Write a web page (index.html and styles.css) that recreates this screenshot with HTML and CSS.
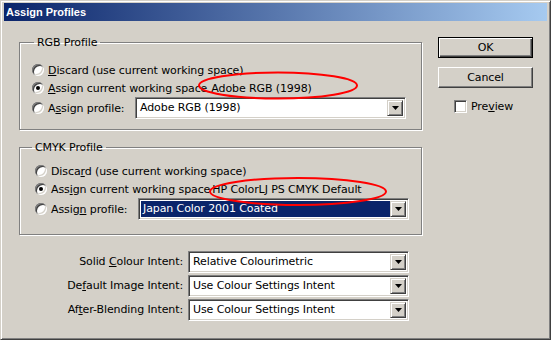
FILE: index.html
```html
<!DOCTYPE html>
<html lang="en">
<head>
    <meta charset="UTF-8">
    <title>Assign Profiles</title>
    <link rel="stylesheet" href="styles.css">
</head>
<body>
    <div class="dialog">
        <div class="titlebar">Assign Profiles</div>
        <div class="content">
            <div class="main">
                <fieldset class="group rgb">
                    <legend>RGB Profile</legend>
                    <div class="rows">
                        <div class="opt"><span class="radio"></span><span><u>D</u>iscard (use current working space)</span></div>
                        <div class="opt"><span class="radio on"></span><span><u>A</u>ssign current working space</span><span class="cur">Adobe RGB (1998)</span></div>
                        <div class="opt pick"><span class="radio"></span><span class="pick-label">A<u>s</u>sign profile:</span>
                            <div class="combo"><span class="combo-text">Adobe RGB (1998)</span><span class="combo-btn"><svg width="7" height="4"><polygon points="0,0 7,0 3.5,4" fill="#000"/></svg></span></div>
                        </div>
                    </div>
                </fieldset>
                <fieldset class="group cmyk">
                    <legend>CMYK Profile</legend>
                    <div class="rows">
                        <div class="opt"><span class="radio"></span><span>Disca<u>r</u>d (use current working space)</span></div>
                        <div class="opt"><span class="radio on"></span><span>Ass<u>i</u>gn current working space</span><span class="cur">HP ColorLJ PS CMYK Default</span></div>
                        <div class="opt pick"><span class="radio"></span><span class="pick-label">Assig<u>n</u> profile:</span>
                            <div class="combo selected"><span class="combo-text">Japan Color 2001 Coated</span><span class="combo-btn"><svg width="7" height="4"><polygon points="0,0 7,0 3.5,4" fill="#000"/></svg></span></div>
                        </div>
                    </div>
                </fieldset>
                <div class="intents">
                    <span class="intent-label">Solid <u>C</u>olour Intent:</span>
                    <div class="combo"><span class="combo-text">Relative Colourimetric</span><span class="combo-btn"><svg width="7" height="4"><polygon points="0,0 7,0 3.5,4" fill="#000"/></svg></span></div>
                    <span class="intent-label">De<u>f</u>ault Image Intent:</span>
                    <div class="combo"><span class="combo-text">Use Colour Settings Intent</span><span class="combo-btn"><svg width="7" height="4"><polygon points="0,0 7,0 3.5,4" fill="#000"/></svg></span></div>
                    <span class="intent-label">Af<u>t</u>er-Blending Intent:</span>
                    <div class="combo"><span class="combo-text">Use Colour Settings Intent</span><span class="combo-btn"><svg width="7" height="4"><polygon points="0,0 7,0 3.5,4" fill="#000"/></svg></span></div>
                </div>
            </div>
            <div class="side">
                <div class="btn default">OK</div>
                <div class="btn">Cancel</div>
                <div class="check"><span class="checkbox"></span><span>Pre<u>v</u>iew</span></div>
            </div>
        </div>
        <!-- red marks drawn over the screenshot -->
        <svg class="marks" width="551" height="340">
            <ellipse cx="278" cy="85.5" rx="79" ry="13" fill="none" stroke="#f00" stroke-width="2"/>
            <ellipse cx="298" cy="191.5" rx="88" ry="13.5" fill="none" stroke="#f00" stroke-width="2"/>
        </svg>
    </div>
</body>
</html>
```

FILE: styles.css
```css
*{box-sizing: border-box;}
body{margin: 0;font-family: "DejaVu Sans", sans-serif;font-size: 11px;letter-spacing: -0.1px;color: #000;}
u{text-decoration: underline;text-underline-offset: 1px;}

.dialog{position: relative;width: 551px;height: 340px;background: #d4d0c8;padding: 2px 3px;
    border: 1px solid;border-color: #d4d0c8 #404040 #404040 #d4d0c8;
    box-shadow: inset 1px 1px 0 #fff, inset -1px -1px 0 #808080;}
.titlebar{height: 18px;line-height: 18px;padding-left: 2px;color: #fff;letter-spacing: 0;
    font: bold 11px/18px "Liberation Sans", Arial, sans-serif;
    background: linear-gradient(to right, #0a246a, #a6caf0);}

.content{display: flex;}
.main{width: 403px;margin-left: 15px;padding-top: 15px;}
.side{width: 95px;margin-left: 16px;padding-top: 16px;}

/* etched group boxes */
.group{margin: 0;padding: 12px 0 10px 0;min-width: 0;border: 1px solid #808080;box-shadow: inset 1px 1px 0 #fff, 1px 1px 0 #fff;}
.group legend{padding: 0 3px;margin-left: 14px;line-height: 13px;}
.rgb .rows{padding-left: 12px;}
.cmyk{margin-top: 11px;padding: 8px 0 14px 0;}
.cmyk legend{margin-left: 12px;}
.cmyk .rows{padding-left: 15px;}

.opt{display: flex;align-items: center;height: 18px;white-space: nowrap;}
.opt.pick{height: 22px;}
.cur{margin-left: 4px;}
.cmyk .cur{margin-left: 2px;}
.pick-label{width: 87px;}

.radio{position: relative;width: 12px;height: 12px;margin-right: 4px;border-radius: 50%;background: #fff;flex: none;
    box-shadow: inset 1px 1px 0 #808080, inset -1px -1px 0 #fff, inset 2px 2px 0 #404040, inset -2px -2px 0 #d4d0c8;}
.radio.on::after{content: "";position: absolute;left: 4px;top: 4px;width: 4px;height: 4px;border-radius: 50%;background: #000;}

/* combo boxes */
.combo{display: flex;width: 271px;height: 22px;padding: 2px;background: #fff;
    border: 1px solid;border-color: #808080 #fff #fff #808080;
    box-shadow: inset 1px 1px 0 #404040, inset -1px -1px 0 #d4d0c8;}
.combo-text{flex: 1;padding-left: 2px;line-height: 16px;white-space: nowrap;overflow: hidden;}
.combo.selected .combo-text{background: #0a246a;color: #fff;}
.combo-btn{display: flex;align-items: center;justify-content: center;width: 16px;background: #d4d0c8;
    border: 1px solid;border-color: #d4d0c8 #404040 #404040 #d4d0c8;
    box-shadow: inset 1px 1px 0 #fff, inset -1px -1px 0 #808080;}
.combo-btn svg{display: block;}

.intents{display: grid;grid-template-columns: 164px 221px;column-gap: 5px;row-gap: 2px;margin-top: 16px;}
.intent-label{text-align: right;line-height: 22px;white-space: nowrap;}
.intents .combo{width: 221px;}

/* buttons */
.btn{height: 21px;line-height: 19px;text-align: center;background: #d4d0c8;
    border: 1px solid;border-color: #fff #404040 #404040 #fff;
    box-shadow: inset -1px -1px 0 #808080;}
.btn.default{border-color: #000;box-shadow: inset 1px 1px 0 #fff, inset -1px -1px 0 #404040, inset -2px -2px 0 #808080;}
.btn + .btn{margin-top: 9px;}
.check{display: flex;align-items: center;height: 13px;margin-top: 12px;padding-left: 16px;}
.checkbox{width: 13px;height: 13px;margin-right: 4px;background: #fff;
    border: 1px solid;border-color: #808080 #fff #fff #808080;
    box-shadow: inset 1px 1px 0 #404040, inset -1px -1px 0 #d4d0c8;}

.marks{position: absolute;left: -1px;top: -1px;pointer-events: none;}
```
